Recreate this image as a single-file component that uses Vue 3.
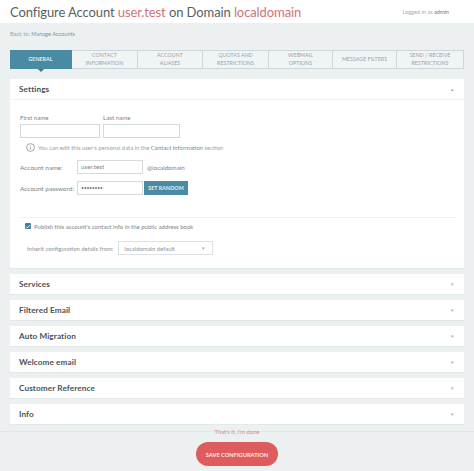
<script setup>
const tabs = [
  { label: 'GENERAL', width: 62 },
  { label: 'CONTACT\nINFORMATION', width: 66 },
  { label: 'ACCOUNT\nALIASES', width: 65 },
  { label: 'QUOTAS AND\nRESTRICTIONS', width: 66 },
  { label: 'WEBMAIL\nOPTIONS', width: 64 },
  { label: 'MESSAGE FILTERS', width: 64 },
  { label: 'SEND / RECEIVE\nRESTRICTIONS', width: 67 },
]
const sections = ['Services', 'Filtered Email', 'Auto Migration', 'Welcome email', 'Customer Reference', 'Info']
</script>

<template>
  <div class="page">
    <header class="header">
      <h1 class="title">Configure Account <em>user.test</em> on Domain <em>localdomain</em></h1>
      <div class="logged">Logged in as <b>admin</b></div>
    </header>

    <main class="main">
      <div class="back">Back to: <a>Manage Accounts</a></div>

      <nav class="tabs">
        <div
          v-for="(t, i) in tabs"
          :key="t.label"
          class="tab"
          :class="{ active: i === 0 }"
          :style="{ width: t.width + 'px' }"
        >{{ t.label }}</div>
      </nav>

      <section class="panel settings">
        <div class="panel-head">
          <span class="panel-title">Settings</span>
          <span class="toggle">▴</span>
        </div>
        <div class="panel-body">
          <div class="names">
            <label class="name-field first">
              <span>First name</span>
              <span class="input"></span>
            </label>
            <label class="name-field last">
              <span>Last name</span>
              <span class="input"></span>
            </label>
          </div>

          <div class="hint">
            <svg width="9" height="9" viewBox="0 0 9 9" class="hint-icon">
              <circle cx="4.5" cy="4.5" r="3.9" fill="none" stroke="#7b8489" stroke-width="0.7" />
              <path d="M4.5 3.8V6.6M4.5 2.3v.8" stroke="#7b8489" stroke-width="0.7" />
            </svg>
            <span>You can edit this user's personal data in the <a>Contact Information</a> section</span>
          </div>

          <div class="row account">
            <span class="row-label">Account name:</span>
            <span class="input wide">user.test</span>
            <span class="domain">@localdomain</span>
          </div>
          <div class="row password">
            <span class="row-label">Account password:</span>
            <span class="input wide dots">••••••••</span>
            <button class="random">SET RANDOM</button>
          </div>

          <div class="rule"></div>

          <div class="publish">
            <span class="check">
              <svg width="7" height="7" viewBox="0 0 7 7">
                <path d="M1.2 3.6l1.6 1.6 3-3.4" fill="none" stroke="#fff" stroke-width="1.1" />
              </svg>
            </span>
            <span>Publish this account's contact info in the public address book</span>
          </div>

          <div class="inherit">
            <span>Inherit configuration details from:</span>
            <span class="select">localdomain default<i class="caret">▾</i></span>
          </div>
        </div>
      </section>

      <section v-for="s in sections" :key="s" class="panel collapsed">
        <div class="panel-head">
          <span class="panel-title">{{ s }}</span>
          <span class="toggle">▾</span>
        </div>
      </section>
    </main>

    <footer class="footer">
      <div class="done">That's it, I'm done</div>
      <button class="save">SAVE CONFIGURATION</button>
    </footer>
  </div>
</template>

<style>
html, body { margin: 0; background: #edf0f1; }
</style>

<style scoped>
.page {
  width: 474px;
  height: 471px;
  overflow: hidden;
  background: #edf0f1;
  font-family: Lato, "Open Sans", sans-serif;
  color: #7a8388;
  font-size: 6.2px;
}
.header {
  height: 23px;
  background: #fff;
  display: flex;
  align-items: center;
  justify-content: space-between;
  padding: 0 25px 0 10px;
}
.title {
  margin: 0;
  font-size: 13px;
  font-weight: 400;
  letter-spacing: -0.1px;
  color: #565f63;
  white-space: nowrap;
}
.title em { font-style: normal; color: #d0727a; }
.logged { font-size: 5.6px; color: #a9b0b4; }
.logged b { color: #6b7478; font-weight: 400; }
.main { padding: 0 10px; }
.back {
  height: 27px;
  line-height: 22px;
  font-size: 5.6px;
  color: #9aa3a7;
  box-sizing: border-box;
}
.back a { color: #7d94a0; }
.tabs { display: flex; height: 19px; }
.tab {
  box-sizing: border-box;
  position: relative;
  display: flex;
  align-items: center;
  justify-content: center;
  text-align: center;
  white-space: pre-line;
  line-height: 7.5px;
  font-size: 5.2px;
  letter-spacing: 0.1px;
  color: #98a2a7;
  background: #f1f4f5;
  border: 1px solid #ccd7db;
  border-left: 0;
}
.tab.active {
  background: #4a8ba4;
  border-color: #4a8ba4;
  color: #e9f2f5;
  font-weight: 700;
}
.tab.active::after {
  content: '';
  position: absolute;
  left: 50%;
  bottom: -4px;
  margin-left: -3px;
  border: solid transparent;
  border-width: 3px 3px 0;
  border-top-color: #4a6e7d;
}
.panel {
  background: #fff;
  width: 454px;
  box-sizing: border-box;
  box-shadow: 0 1px 0 #e3e8ea;
}
.settings { height: 189px; margin-top: 10px; }
.collapsed { height: 20px; margin-top: 6px; }
.panel-head {
  height: 20px;
  display: flex;
  align-items: center;
  justify-content: space-between;
  padding: 0 10px 0 9px;
}
.settings .panel-head { border-bottom: 1px solid #f1f3f4; }
.panel-title {
  font-size: 8.2px;
  font-weight: 700;
  color: #4a5256;
  letter-spacing: 0.1px;
}
.toggle { font-size: 5px; color: #a4abae; }
.panel-body { padding: 14px 10px 0; position: relative; }
.names { display: flex; gap: 3px; }
.name-field { display: flex; flex-direction: column; gap: 2px; line-height: 8px; }
.first { width: 80px; }
.last { width: 77px; }
.input {
  display: block;
  box-sizing: border-box;
  height: 14px;
  background: #fff;
  border: 1px solid #d5dadc;
  line-height: 12px;
  padding: 0 3px;
}
.hint {
  display: flex;
  align-items: center;
  gap: 3px;
  height: 9px;
  margin: 5px 0 0 6px;
  color: #98a1a5;
  font-size: 5.9px;
  white-space: nowrap;
}
.hint-icon { flex: none; }
.hint a { color: #6f8e9d; }
.row { display: flex; align-items: center; height: 14px; }
.account { margin-top: 8px; }
.password { margin-top: 7px; }
.row-label { width: 57px; flex: none; font-size: 6.5px; white-space: nowrap; }
.wide { width: 66px; flex: none; }
.domain { margin-left: 4px; }
.dots { font-size: 5px; letter-spacing: -0.2px; }
.random {
  margin-left: 1px;
  width: 44px;
  height: 14px;
  padding: 0;
  border: 0;
  background: #4a8ba4;
  color: #e6f0f4;
  font: 700 5.3px Lato, sans-serif;
  letter-spacing: 0.1px;
}
.rule { height: 1px; width: 435px; background: #eff1f2; margin-top: 22px; }
.publish {
  display: flex;
  align-items: center;
  gap: 3px;
  margin: 4px 0 0 5px;
  height: 8px;
  font-size: 6px;
}
.check {
  width: 6px;
  height: 6px;
  flex: none;
  background: #3f7f99;
  display: flex;
  align-items: center;
  justify-content: center;
  border-radius: 1px;
}
.inherit {
  display: flex;
  align-items: center;
  gap: 5px;
  margin: 11px 0 0 7px;
  height: 14px;
  font-size: 5.9px;
  color: #8a9397;
}
.select {
  box-sizing: border-box;
  width: 95px;
  height: 14px;
  border: 1px solid #dde1e3;
  line-height: 13px;
  padding: 0 5px;
  display: flex;
  justify-content: space-between;
}
.caret { font-style: normal; font-size: 5px; color: #a4abae; margin-right: 2px; }
.footer {
  margin-top: 7px;
  border-top: 1px solid #e2e6e8;
  display: flex;
  flex-direction: column;
  align-items: center;
}
.done {
  height: 10px;
  line-height: 0;
  font-size: 5.8px;
  color: #c98c90;
}
.save {
  width: 82px;
  height: 24px;
  border: 0;
  border-radius: 12px;
  background: #de5c5e;
  color: #fbe9e9;
  font: 700 5.7px Lato, sans-serif;
  padding: 0;
  white-space: nowrap;
}
</style>
